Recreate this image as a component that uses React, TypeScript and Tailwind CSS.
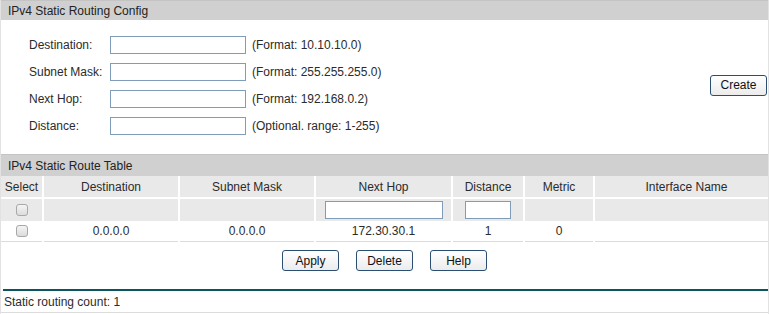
import React from 'react';

const fields = [
  { label: 'Destination:', hint: '(Format: 10.10.10.0)' },
  { label: 'Subnet Mask:', hint: '(Format: 255.255.255.0)' },
  { label: 'Next Hop:', hint: '(Format: 192.168.0.2)' },
  { label: 'Distance:', hint: '(Optional. range: 1-255)' },
];

const columns = ['Select', 'Destination', 'Subnet Mask', 'Next Hop', 'Distance', 'Metric', 'Interface Name'];

const routes = [{ destination: '0.0.0.0', mask: '0.0.0.0', nextHop: '172.30.30.1', distance: '1', metric: '0', iface: '' }];

function SectionTitle({ children, tall }: { children: React.ReactNode; tall?: boolean }) {
  return (
    <div className={`${tall ? 'h-[22px]' : 'h-[20px]'} bg-[#d0d0d0] border-t border-[#c4c4c4] flex items-center pl-[7px] text-[12px] text-[#222]`}>
      {children}
    </div>
  );
}

function Btn({ children }: { children: React.ReactNode }) {
  return (
    <button className="w-[57px] h-[21px] rounded-[3px] border border-[#2a4f73] bg-gradient-to-b from-white to-[#ececec] text-[12px] text-[#111] leading-none">
      {children}
    </button>
  );
}

function Check() {
  return <span className="block w-[12px] h-[12px] rounded-[3px] border border-[#a8a8a8] bg-gradient-to-b from-[#f4f4f4] to-[#dcdcdc]" />;
}

export default function App() {
  const cell = 'bg-[#e9e9e9] flex items-center justify-center';
  return (
    <div className="w-[769px] h-[314px] bg-white border-x border-[#e2e2e2] text-[#2b2b2b] text-[12px]" style={{ fontFamily: '"Liberation Sans", Arial, sans-serif' }}>
      <SectionTitle>IPv4 Static Routing Config</SectionTitle>

      <div className="flex items-center h-[134px] pt-[11px] pb-[15px]">
        <div className="flex flex-col flex-1">
          {fields.map(f => (
            <div key={f.label} className="flex items-center h-[27px] pl-[28px]">
              <span className="w-[81px]">{f.label}</span>
              <input className="w-[136px] h-[18px] border border-[#7f9db9] bg-white outline-none" />
              <span className="ml-[6px]">{f.hint}</span>
            </div>
          ))}
        </div>
        <div className="pr-[1px]">
          <Btn>Create</Btn>
        </div>
      </div>

      <SectionTitle tall>IPv4 Static Route Table</SectionTitle>

      <div className="grid grid-cols-[41px_134px_134px_135px_70px_68px_1fr] gap-x-[2px] gap-y-[2px] bg-white">
        {columns.map(c => (
          <div key={c} className={`${cell} h-[21px] ${c === 'Interface Name' ? 'pl-[10px]' : ''}`}>{c}</div>
        ))}
        <div className={`${cell} h-[22px]`}><Check /></div>
        <div className={`${cell} h-[22px]`} />
        <div className={`${cell} h-[22px]`} />
        <div className={`${cell} h-[22px]`}>
          <input className="w-[118px] h-[18px] border border-[#7f9db9] bg-white outline-none" />
        </div>
        <div className={`${cell} h-[22px]`}>
          <input className="w-[46px] h-[18px] border border-[#7f9db9] bg-white outline-none" />
        </div>
        <div className={`${cell} h-[22px]`} />
        <div className={`${cell} h-[22px]`} />
      </div>

      {routes.map((r, i) => (
        <div key={i} className="grid grid-cols-[41px_134px_134px_135px_70px_68px_1fr] gap-x-[2px] h-[21px]">
          <div className="flex items-center justify-center border-b border-[#dcdcdc]"><Check /></div>
          <div className="flex items-center justify-center border-b border-[#dcdcdc]">{r.destination}</div>
          <div className="flex items-center justify-center border-b border-[#dcdcdc]">{r.mask}</div>
          <div className="flex items-center justify-center border-b border-[#dcdcdc]">{r.nextHop}</div>
          <div className="flex items-center justify-center border-b border-[#dcdcdc]">{r.distance}</div>
          <div className="flex items-center justify-center border-b border-[#dcdcdc]">{r.metric}</div>
          <div className="flex items-center justify-center border-b border-[#dcdcdc]">{r.iface}</div>
        </div>
      ))}

      <div className="flex justify-center gap-[17px] pt-[8px] h-[47px]">
        <Btn>Apply</Btn>
        <Btn>Delete</Btn>
        <Btn>Help</Btn>
      </div>

      <div className="ml-[2px] h-[2px] bg-[#0d5461]" />
      <div className="h-[22px] flex items-center pl-[3px] border-b border-[#dcdcdc]">Static routing count: 1</div>
    </div>
  );
}
